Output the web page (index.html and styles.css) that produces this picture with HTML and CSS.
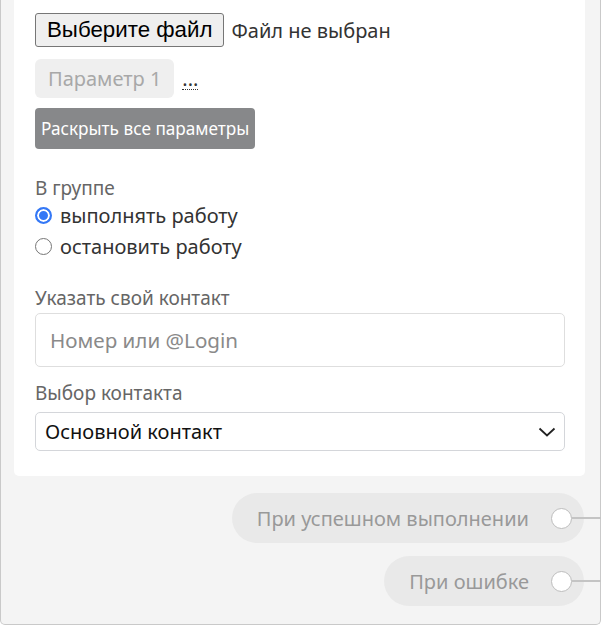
FILE: index.html
```html
<!DOCTYPE html>
<html lang="ru">
<head>
<meta charset="utf-8">
<link rel="stylesheet" href="styles.css">
</head>
<body>
<div class="node">
  <div class="card">
    <div class="file-row">
      <button class="file-btn">Выберите файл</button>
      <span class="file-name">Файл не выбран</span>
    </div>
    <div class="param-row">
      <span class="chip">Параметр 1</span>
      <span class="more">...</span>
    </div>
    <button class="expand-btn">Раскрыть все параметры</button>

    <div class="group">
      <div class="label">В группе</div>
      <label class="radio"><span class="dot checked"></span>выполнять работу</label>
      <label class="radio"><span class="dot"></span>остановить работу</label>
    </div>

    <div class="field">
      <div class="label">Указать свой контакт</div>
      <div class="input">Номер или @Login</div>
    </div>

    <div class="field field-select">
      <div class="label">Выбор контакта</div>
      <div class="select">
        <span>Основной контакт</span>
        <svg class="chev" width="18" height="10" viewBox="0 0 18 10"><path d="M1.5 1.5 L9 8.5 L16.5 1.5" fill="none" stroke="#222" stroke-width="1.8"/></svg>
      </div>
    </div>
  </div>

  <div class="outputs">
    <div class="pill"><span>При успешном выполнении</span><span class="port"></span></div>
    <div class="pill"><span>При ошибке</span><span class="port"></span></div>
  </div>
</div>
</body>
</html>
```
FILE: styles.css
```css
html, body {
  margin: 0;
  padding: 0;
  background: #fff;
}
body {
  font-family: "Noto Sans", "Open Sans", sans-serif;
}
.node {
  box-sizing: border-box;
  width: 601px;
  height: 625px;
  background: #f4f4f4;
  border: 1px solid #c9c9c9;
  border-top: none;
  border-radius: 0 0 5px 5px;
  padding: 0 15px 0 13px;
}
.card {
  background: #fff;
  border-radius: 0 0 5px 5px;
  padding: 13px 20px 25px 21px;
}
.file-row {
  display: flex;
  align-items: center;
  gap: 7px;
}
.file-btn {
  font-family: "Liberation Sans", Arial, sans-serif;
  font-size: 22.3px;
  height: 34px;
  padding: 0 11px;
  background: #efefef;
  color: #000;
  border: 1px solid #767676;
  border-radius: 3px;
}
.file-name {
  font-size: 20px;
  color: #333;
}
.param-row {
  display: flex;
  align-items: center;
  gap: 8px;
  margin-top: 12px;
}
.chip {
  display: inline-flex;
  align-items: center;
  height: 39px;
  padding: 0 13px;
  background: #efefef;
  border-radius: 6px;
  color: #a8a8a8;
  font-size: 20px;
  box-sizing: border-box;
}
.more {
  display: inline-block;
  font-size: 20px;
  line-height: 20px;
  color: #333;
  border-bottom: 1px dotted #333;
  margin-top: 2px;
}
.expand-btn {
  display: block;
  margin-top: 10px;
  height: 41px;
  padding: 0 6px;
  background: #87888a;
  color: #fff;
  border: none;
  border-radius: 4px;
  font-family: "Noto Sans", "Open Sans", sans-serif;
  font-size: 17.2px;
}
.group {
  margin-top: 27px;
}
.label {
  font-size: 19px;
  color: #666;
  line-height: 24px;
}
.radio {
  display: flex;
  align-items: center;
  font-size: 20px;
  color: #333;
  line-height: 31px;
  gap: 8px;
}
.dot {
  box-sizing: border-box;
  width: 17px;
  height: 17px;
  border-radius: 50%;
  border: 1px solid #767676;
  background: #fff;
}
.dot.checked {
  border: 2px solid #3478f6;
  background: #3478f6;
  box-shadow: inset 0 0 0 2px #fff;
}
.field {
  margin-top: 24px;
}
.input {
  box-sizing: border-box;
  margin-top: 3px;
  height: 54px;
  border: 1px solid #dedede;
  border-radius: 5px;
  display: flex;
  align-items: center;
  padding-left: 14px;
  font-size: 20.6px;
  color: #8a8a8a;
}
.field-select {
  margin-top: 14px;
}
.select {
  box-sizing: border-box;
  margin-top: 7px;
  height: 39px;
  border: 1px solid #d4d6da;
  border-radius: 5px;
  display: flex;
  align-items: center;
  justify-content: space-between;
  padding: 0 8px 0 9px;
  font-size: 20px;
  color: #111;
}
.outputs {
  display: flex;
  flex-direction: column;
  align-items: flex-end;
  gap: 13px;
  margin-top: 17px;
  padding-right: 1px;
}
.pill {
  display: flex;
  align-items: center;
  gap: 22px;
  height: 50px;
  padding: 0 12px 0 25px;
  border-radius: 25px;
  background: #e9e9e9;
  color: #999;
  font-size: 20px;
}
.port {
  position: relative;
  box-sizing: border-box;
  width: 21px;
  height: 21px;
  border-radius: 50%;
  background: #fff;
  border: 1px solid #bdbdbd;
}
.port::after {
  content: "";
  position: absolute;
  left: 20px;
  top: 8px;
  width: 29px;
  height: 2px;
  background: #c4c4c4;
}
```
